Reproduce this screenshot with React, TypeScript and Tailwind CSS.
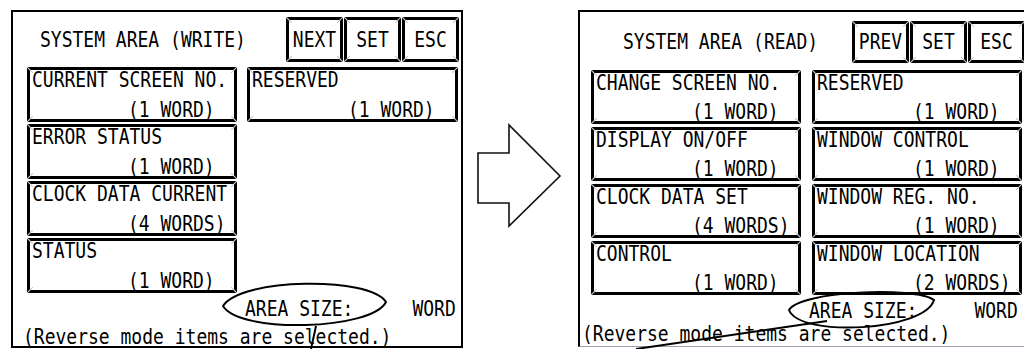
import type { ReactNode } from 'react'

type Item = { name: string; size: string }

const writeLeft: Item[] = [
  { name: 'CURRENT SCREEN NO.', size: '(1 WORD)' },
  { name: 'ERROR STATUS', size: '(1 WORD)' },
  { name: 'CLOCK DATA CURRENT', size: '(4 WORDS)' },
  { name: 'STATUS', size: '(1 WORD)' }
]
const writeRight: Item[] = [{ name: 'RESERVED', size: '(1 WORD)' }]

const readLeft: Item[] = [
  { name: 'CHANGE SCREEN NO.', size: '(1 WORD)' },
  { name: 'DISPLAY ON/OFF', size: '(1 WORD)' },
  { name: 'CLOCK DATA SET', size: '(4 WORDS)' },
  { name: 'CONTROL', size: '(1 WORD)' }
]
const readRight: Item[] = [
  { name: 'RESERVED', size: '(1 WORD)' },
  { name: 'WINDOW CONTROL', size: '(1 WORD)' },
  { name: 'WINDOW REG. NO.', size: '(1 WORD)' },
  { name: 'WINDOW LOCATION', size: '(2 WORDS)' }
]

// the panel font is a tall, narrow half-width gothic; stretch the mono a bit
function T({ children, className = '' }: { children: ReactNode; className?: string }) {
  return <span className={`inline-block scale-y-[1.18] whitespace-pre ${className}`}>{children}</span>
}

// little mitre marks in the corners of the bevelled frames
function Corners() {
  return (
    <>
      <svg aria-hidden className="absolute -left-[3px] -top-[3px] h-[6px] w-[6px]" viewBox="0 0 6 6">
        <line x1="0" y1="0" x2="6" y2="6" stroke="#c8c8c8" strokeWidth="1.2" />
      </svg>
      <svg aria-hidden className="absolute -right-[3px] -top-[3px] h-[6px] w-[6px]" viewBox="0 0 6 6">
        <line x1="6" y1="0" x2="0" y2="6" stroke="#c8c8c8" strokeWidth="1.2" />
      </svg>
      <svg aria-hidden className="absolute -bottom-[3px] -left-[3px] h-[6px] w-[6px]" viewBox="0 0 6 6">
        <line x1="0" y1="6" x2="6" y2="0" stroke="#c8c8c8" strokeWidth="1.2" />
      </svg>
      <svg aria-hidden className="absolute -bottom-[3px] -right-[3px] h-[6px] w-[6px]" viewBox="0 0 6 6">
        <line x1="6" y1="6" x2="0" y2="0" stroke="#c8c8c8" strokeWidth="1.2" />
      </svg>
    </>
  )
}

function Key({ children, className }: { children: ReactNode; className: string }) {
  return (
    <div className={`relative flex w-[57px] items-center justify-center border-[3px] border-black bg-white ${className}`}>
      <Corners />
      <T>{children}</T>
    </div>
  )
}

function AreaBox({ item, className }: { item: Item; className: string }) {
  return (
    <div className={`relative flex flex-col items-start justify-between border-[3px] border-black bg-white pl-[2px] pt-[1px] ${className}`}>
      <Corners />
      <T>{item.name}</T>
      <T className="ml-[96px]">{item.size}</T>
    </div>
  )
}

function Arrow() {
  return (
    <svg aria-hidden className="h-[349px] w-[115px] shrink-0" viewBox="0 0 115 349">
      <polygon
        points="15,153 46,153 46,125 97,176 46,226 46,203 15,203"
        fill="white"
        stroke="#111"
        strokeWidth="1.6"
        strokeLinejoin="miter"
      />
    </svg>
  )
}

function Callouts() {
  return (
    <svg aria-hidden className="pointer-events-none absolute left-0 top-0 h-[349px] w-[1024px]" viewBox="0 0 1024 349">
      <g fill="none" stroke="#000" strokeWidth="2">
        <path d="M223 306 C240 278 370 276 386 302 C372 330 240 334 223 306 Z" />
        <line x1="316" y1="326" x2="311" y2="349" />
        <path d="M789 310 C800 291 915 286 934 300 C925 331 800 338 789 310 Z" />
        <line x1="827" y1="321" x2="636" y2="349" />
      </g>
    </svg>
  )
}

export default function App() {
  return (
    <div className="relative flex h-[349px] w-[1024px] items-start overflow-hidden bg-white font-['DejaVu_Sans_Mono',monospace] text-[18px] leading-[18px] text-black">
      {/* write side */}
      <div className="ml-[11px] mt-[10px] flex h-[338px] w-[452px] shrink-0 flex-col border-2 border-black">
        <div className="flex items-center pl-[27px] pr-[2px] pt-[5px]">
          <div className="flex-1">
            <T>SYSTEM AREA (WRITE)</T>
          </div>
          <div className="flex gap-[1px]">
            <Key className="h-[45px]">NEXT</Key>
            <Key className="h-[45px]">SET</Key>
            <Key className="h-[45px]">ESC</Key>
          </div>
        </div>
        <div className="mt-[5px] flex gap-[10px] pl-[14px]">
          <div className="flex w-[210px] flex-col gap-[2px]">
            {writeLeft.map(it => (
              <AreaBox key={it.name} item={it} className="h-[55px]" />
            ))}
          </div>
          <div className="flex w-[211px] flex-col gap-[2px]">
            {writeRight.map(it => (
              <AreaBox key={it.name} item={it} className="h-[55px]" />
            ))}
          </div>
        </div>
        <div className="mt-[6px] flex h-[20px] items-center pl-[232px]">
          <T>AREA SIZE:</T>
          <T className="ml-[59px]">WORD</T>
        </div>
        <div className="mt-[9px] pl-[10px]">
          <T>(Reverse mode items are selected.)</T>
        </div>
      </div>

      <Arrow />

      {/* read side */}
      <div className="mt-[10px] flex h-[337px] w-[470px] shrink-0 flex-col border-b border-l-2 border-t-2 border-b-gray-400 border-l-black border-t-black">
        <div className="flex items-center pl-[43px] pt-[9px]">
          <div className="w-[229px]">
            <T>SYSTEM AREA (READ)</T>
          </div>
          <div className="flex gap-[1px]">
            <Key className="h-[42px]">PREV</Key>
            <Key className="h-[42px]">SET</Key>
            <Key className="h-[42px]">ESC</Key>
          </div>
        </div>
        <div className="mt-[7px] flex gap-[11px] pl-[11px]">
          <div className="flex w-[210px] flex-col gap-[3px]">
            {readLeft.map(it => (
              <AreaBox key={it.name} item={it} className="h-[54px]" />
            ))}
          </div>
          <div className="flex w-[210px] flex-col gap-[3px]">
            {readRight.map(it => (
              <AreaBox key={it.name} item={it} className="h-[54px]" />
            ))}
          </div>
        </div>
        <div className="mt-[6px] flex h-[20px] items-center pl-[229px]">
          <T>AREA SIZE:</T>
          <T className="ml-[57px]">WORD</T>
        </div>
        <div className="mt-[4px] pl-[2px]">
          <T>(Reverse mode items are selected.)</T>
        </div>
      </div>

      <Callouts />
    </div>
  )
}
